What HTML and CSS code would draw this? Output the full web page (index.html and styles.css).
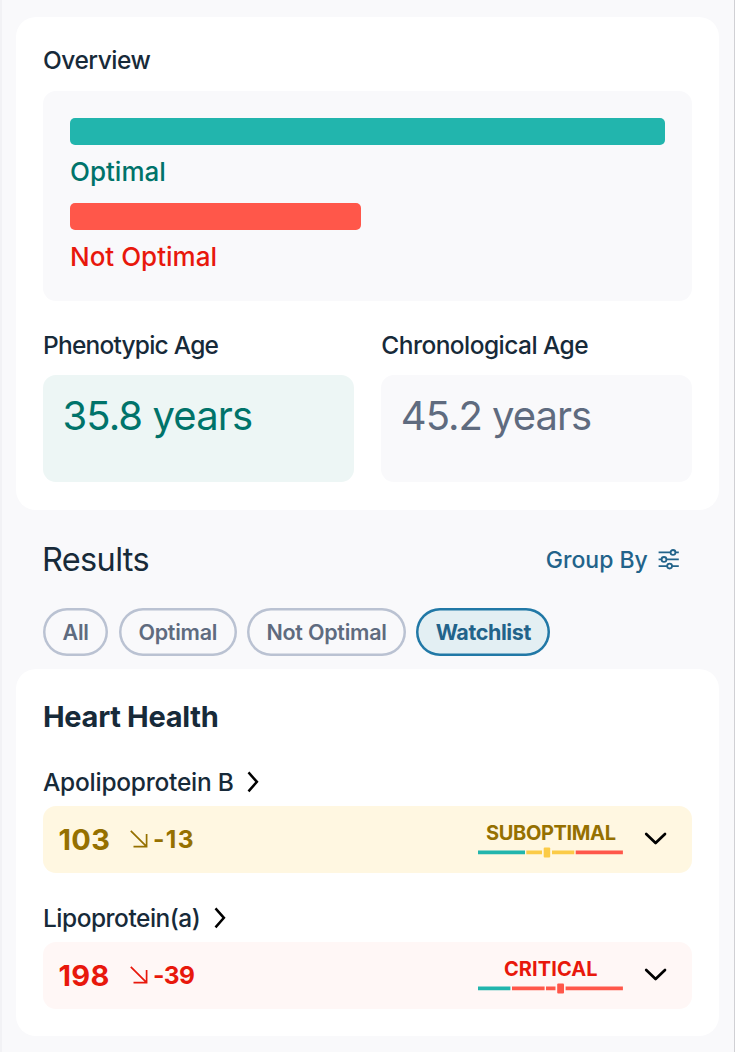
FILE: index.html
```html
<!DOCTYPE html>
<html lang="en">
<head>
    <meta charset="UTF-8">
    <meta name="viewport" content="width=device-width, initial-scale=1.0">
    <title>Results</title>
    <link rel="stylesheet" href="styles.css">
</head>
<body>
<main class="page">
    <section class="card overview">
        <h2 class="label t-overview">Overview</h2>
        <div class="panel">
            <div class="bar optimal"></div>
            <p class="bar-label green">Optimal</p>
            <div class="bar not-optimal"></div>
            <p class="bar-label red">Not Optimal</p>
        </div>
        <div class="ages">
            <div class="age">
                <h2 class="label t-pheno">Phenotypic Age</h2>
                <div class="age-box phenotypic">35.8 years</div>
            </div>
            <div class="age">
                <h2 class="label t-chrono">Chronological Age</h2>
                <div class="age-box">45.2 years</div>
            </div>
        </div>
    </section>

    <header class="results-header">
        <h1>Results</h1>
        <a class="group-by">
            <span>Group By</span>
            <svg width="22" height="22" viewBox="0 0 22 22" fill="none" stroke="currentColor" stroke-width="1.8">
                <path d="M.6 3.4h12M17.4 3.4h3.4M.6 10.4h3M8.4 10.4h12.4M.6 17.1h8.5M14 17.1h6.8"/>
                <circle cx="15" cy="3.4" r="2.4"/>
                <circle cx="6" cy="10.4" r="2.4"/>
                <circle cx="11.6" cy="17.1" r="2.4"/>
            </svg>
        </a>
    </header>

    <nav class="filters">
        <button class="chip chip-all">All</button>
        <button class="chip chip-optimal">Optimal</button>
        <button class="chip chip-not">Not Optimal</button>
        <button class="chip chip-watch active">Watchlist</button>
    </nav>

    <section class="card results">
        <h2 class="group-title">Heart Health</h2>

        <div class="marker-name">
            <span class="t-apo">Apolipoprotein B</span>
            <svg width="12" height="22" viewBox="0 0 12 22" fill="none" stroke="#000" stroke-width="2.5"><path d="M1.5 1.3l8.4 9.5-8.4 9.5"/></svg>
        </div>
        <div class="result suboptimal">
            <span class="value">103</span>
            <svg class="trend" width="18" height="18" viewBox="0 0 18 18" fill="none" stroke="currentColor" stroke-width="1.7"><path d="M.8.8l15.6 15.6M16.6 4v12.7H3.5"/></svg>
            <span class="change wide">-13</span>
            <div class="status">
                <span class="status-text">SUBOPTIMAL</span>
                <svg width="145" height="11" viewBox="0 0 145 11">
                    <path fill="#22b5ad" d="M0 3.6h47v3.6H0z"/>
                    <path fill="#fbcb47" d="M48.3 3.6H64v3.6H48.3zM74 3.6h22.3v3.6H74z"/>
                    <path fill="#ff574a" d="M97.7 3.6h47.2v3.6H97.7z"/>
                    <rect fill="#fbcb47" x="65.7" y=".4" width="6.5" height="10" rx="1"/>
                </svg>
            </div>
            <svg class="expand" width="24" height="14" viewBox="0 0 24 14" fill="none" stroke="#000" stroke-width="2.7" stroke-linecap="round" stroke-linejoin="round"><path d="M2.2 2l9.4 9L21 2"/></svg>
        </div>

        <div class="marker-name">
            <span class="t-lipo">Lipoprotein(a)</span>
            <svg width="12" height="22" viewBox="0 0 12 22" fill="none" stroke="#000" stroke-width="2.5"><path d="M1.5 1.3l8.4 9.5-8.4 9.5"/></svg>
        </div>
        <div class="result critical">
            <span class="value">198</span>
            <svg class="trend" width="18" height="18" viewBox="0 0 18 18" fill="none" stroke="currentColor" stroke-width="1.7"><path d="M.8.8l15.6 15.6M16.6 4v12.7H3.5"/></svg>
            <span class="change">-39</span>
            <div class="status">
                <span class="status-text wide">CRITICAL</span>
                <svg width="145" height="11" viewBox="0 0 145 11">
                    <path fill="#22b5ad" d="M0 3.6h32.4v3.6H0z"/>
                    <path fill="#ff574a" d="M34 3.6h32.6v3.6H34zM68 3.6h9.5v3.6H68zM87.6 3.6h57.3v3.6H87.6z"/>
                    <rect fill="#ff574a" x="79.2" y=".4" width="6.8" height="10" rx="1"/>
                </svg>
            </div>
            <svg class="expand" width="24" height="14" viewBox="0 0 24 14" fill="none" stroke="#000" stroke-width="2.7" stroke-linecap="round" stroke-linejoin="round"><path d="M2.2 2l9.4 9L21 2"/></svg>
        </div>
    </section>
</main>
</body>
</html>
```
FILE: styles.css
```css
* {
    box-sizing: border-box;
}

body {
    margin: 0;
    background-color: #fff;
    font-family: Inter, 'Open Sans', sans-serif;
    color: #172a39;
}

h1, h2, p {
    margin: 0;
}

svg {
    display: block;
    flex-shrink: 0;
}

.page {
    width: 735px;
    height: 1052px;
    overflow: hidden;
    padding: 16.5px 14.7px 0 14px;
    background-color: #f9f9fb;
    border-left: 2px solid #f2f2f5;
    border-right: 1px solid #d0d0d4;
}

.card {
    background-color: #fff;
    border-radius: 20px;
    padding: 0 27px;
}

.overview {
    height: 493px;
    padding-top: 25.5px;
}

.label {
    font-size: 24.5px;
    font-weight: 500;
    line-height: 36px;
    white-space: nowrap;
}

.t-overview { letter-spacing: -0.5px; }
.t-pheno { letter-spacing: -0.78px; }
.t-chrono { letter-spacing: -0.55px; }
.t-apo { letter-spacing: -0.25px; }
.t-lipo { letter-spacing: -0.5px; }

.panel {
    height: 210.3px;
    margin-top: 12.7px;
    padding: 27px;
    border-radius: 13px;
    background-color: #f9f9fb;
}

.bar {
    height: 27.3px;
    border-radius: 5px;
}

.bar.optimal {
    width: 595px;
    background-color: #22b5ad;
}

.bar.not-optimal {
    width: 291px;
    background-color: #ff574a;
}

.bar-label {
    height: 57.7px;
    font-size: 26px;
    font-weight: 500;
    line-height: 54px;
}

.green {
    color: #00736a;
}

.red {
    color: #e8180c;
}

.ages {
    display: flex;
    gap: 27.3px;
    margin-top: 26.3px;
}

.age {
    flex: 1;
}

.age-box {
    height: 107px;
    margin-top: 12px;
    padding: 14px 19.5px;
    border-radius: 13px;
    background-color: #f9f9fb;
    color: #5f6b7f;
    font-size: 40px;
    line-height: 54px;
    letter-spacing: -1px;
}

.age-box.phenotypic {
    background-color: #edf6f5;
    color: #00736a;
    letter-spacing: -0.9px;
}

.results-header {
    display: flex;
    justify-content: space-between;
    align-items: center;
    height: 40px;
    margin-top: 30px;
    padding: 0 39px 0 26px;
}

h1 {
    font-size: 32.5px;
    font-weight: 400;
    letter-spacing: -0.65px;
}

.group-by {
    display: flex;
    align-items: center;
    gap: 10.5px;
    color: #22638a;
    font-size: 23px;
    font-weight: 500;
}

.filters {
    display: flex;
    gap: 10.5px;
    margin-top: 28.5px;
    padding-left: 27px;
}

.chip {
    height: 47.5px;
    padding: 0;
    border: none;
    border-radius: 24px;
    box-shadow: inset 0 0 0 2.5px #bac2d2;
    background: transparent;
    color: #5f6b7f;
    font-family: inherit;
    font-size: 21.5px;
    font-weight: 600;
    letter-spacing: -0.25px;
    white-space: nowrap;
}

.chip-all { width: 65.3px; }
.chip-optimal { width: 118px; }
.chip-not { width: 158.5px; }
.chip-watch { width: 134px; }

.chip.active {
    background-color: #e3eff3;
    box-shadow: inset 0 0 0 2.5px #2178a6;
    color: #22638a;
    font-weight: 700;
    letter-spacing: -0.4px;
}

.results {
    height: 366.4px;
    margin-top: 13.8px;
    padding-top: 27.3px;
}

.group-title {
    font-size: 29px;
    font-weight: 700;
    line-height: 40px;
    letter-spacing: -0.3px;
}

.marker-name {
    display: flex;
    align-items: center;
    gap: 13.3px;
    height: 69px;
    padding-top: 22px;
    font-size: 24.5px;
    font-weight: 500;
}

.result {
    display: flex;
    align-items: center;
    height: 67px;
    padding: 0 24px 0 15.5px;
    border-radius: 13px;
    font-weight: 700;
}

.suboptimal {
    background-color: #fff7e1;
    color: #957000;
}

.critical {
    background-color: #fff7f6;
    color: #e8180c;
}

.value {
    width: 71.5px;
    font-size: 29px;
    letter-spacing: 0.3px;
}

.change {
    margin-left: 5px;
    font-size: 24.5px;
    letter-spacing: -0.6px;
}

.change.wide {
    letter-spacing: 1.4px;
}

.status {
    display: flex;
    flex-direction: column;
    align-items: center;
    margin-left: auto;
}

.status-text {
    height: 27px;
    font-size: 20px;
    line-height: 26px;
    letter-spacing: -0.35px;
}

.status-text.wide {
    letter-spacing: 0.1px;
}

.expand {
    margin-left: 21px;
}
```
